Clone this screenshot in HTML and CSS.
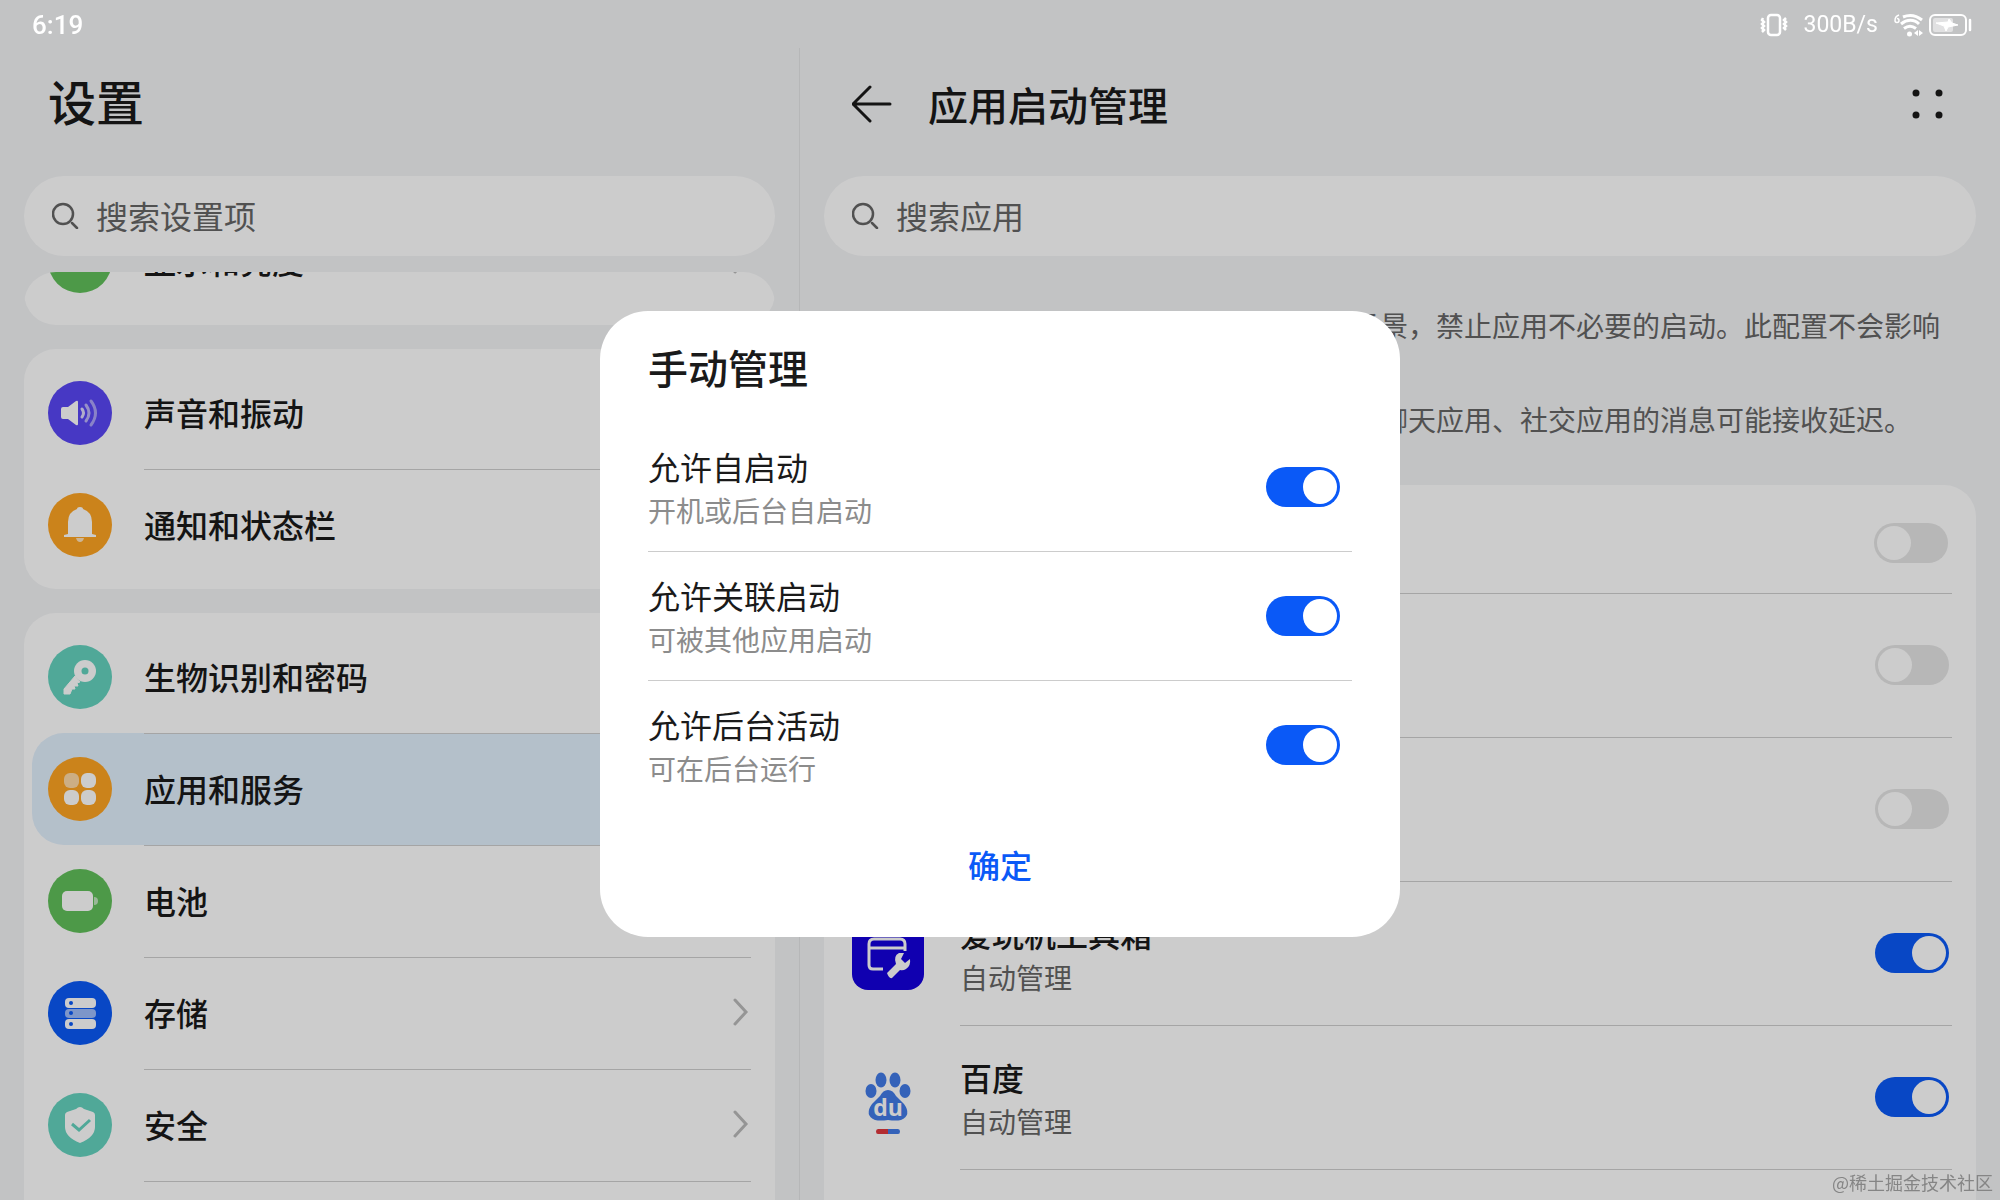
FILE: index.html
```html
<!DOCTYPE html>
<html lang="zh-CN">
<head>
<meta charset="utf-8">
<title>设置</title>
<link rel="stylesheet" href="styles.css">
</head>
<body>
<!-- 状态栏 -->
<div class="status">
	<span class="time">6:19</span>
	<div class="status-right">
		<svg class="vibrate" width="28" height="24" viewBox="0 0 28 24" fill="none" stroke="#fff" stroke-width="2.500">
			<rect x="8" y="2" width="12" height="20" rx="3"/>
			<path d="M3 5l-1 2 2 2-2 2 2 2-2 2 2 2-2 2M26 5l-2 2 2 2-2 2 2 2-2 2 2 2"/>
		</svg>
		<span class="speed">300B/s</span>
		<svg width="30" height="24" viewBox="0 0 30 24" fill="none" stroke="#fff" stroke-width="3">
			<path d="M5 2C2 3 1 5 1 7.500a2 2 0 1 0 2-2" stroke-width="1.500"/>
			<path d="M9 4c7-3 14-1 19 3M7 11c6-5 13-5 18 0M10 15.500c4-3 8-3 12 0"/>
			<circle cx="15.500" cy="21" r="2.500" fill="#fff" stroke="none"/>
			<path d="M24 17v6l-4-3zM25 17v6l4-3z" fill="#fff" stroke="none"/>
		</svg>
		<svg class="battery-top" width="44" height="24" viewBox="0 0 44 24">
			<rect x="2" y="2" width="36" height="20" rx="5" fill="none" stroke="#fff" stroke-width="2"/>
			<rect x="5" y="5" width="20" height="14" rx="2" fill="#fff" opacity=".5"/>
			<path d="M8 10l12-1 1-3 3 4 6 2-10 2-2 4-2-5z" fill="#fff" stroke="#fff"/>
			<path d="M42 7v10" stroke="#fff" stroke-width="2.500" stroke-linecap="round"/>
		</svg>
	</div>
</div>

<div class="page">
	<!-- 左侧 设置列表 -->
	<div class="side">
		<header class="head">
			<h1>设置</h1>
		</header>
		<label class="search">
			<svg width="28" height="28" viewBox="0 0 28 28" fill="none" stroke="#666" stroke-width="2.500" stroke-linecap="round"><circle cx="11" cy="13" r="10"/><path d="M20 22l5 5"/></svg>
			<input type="text" placeholder="搜索设置项">
		</label>
		<div class="scroll">
			<div class="list">
				<ul class="card">
					<li class="item">
						<span class="icon green"><svg width="64" height="64" viewBox="0 0 64 64"><circle cx="32" cy="32" r="10" fill="#fff"/></svg></span>
						<a href="#" class="text">显示和亮度<svg class="more" width="16" height="28" viewBox="0 0 16 28"><path d="M2 2l11 12L2 26"/></svg></a>
					</li>
				</ul>
				<ul class="card">
					<li class="item">
						<span class="icon purple"><svg width="64" height="64" viewBox="0 0 64 64">
							<path d="M15 26h5l8-6q2-1 2 1v22q0 2-2 1l-8-6h-5q-2 0-2-2v-8q0-2 2-2z" fill="#fff"/>
							<g fill="none" stroke="#fff" stroke-width="3" stroke-linecap="round"><path d="M34 28q3 4 0 8" opacity=".8"/><path d="M38 24q6 8 0 16" opacity=".6"/><path d="M43 20q9 12 0 24" opacity=".5"/></g>
						</svg></span>
						<a href="#" class="text">声音和振动<svg class="more" width="16" height="28" viewBox="0 0 16 28"><path d="M2 2l11 12L2 26"/></svg></a>
					</li>
					<li class="item">
						<span class="icon orange"><svg width="64" height="64" viewBox="0 0 64 64" fill="#fff">
							<path d="M32 14q3 0 3 2 9 3 9 13v12l4 1v2H16v-2l4-1V29q0-10 9-13 0-2 3-2z"/>
							<path d="M28 45h8q-1 4-4 4t-4-4z" opacity=".7"/>
						</svg></span>
						<a href="#" class="text">通知和状态栏<svg class="more" width="16" height="28" viewBox="0 0 16 28"><path d="M2 2l11 12L2 26"/></svg></a>
					</li>
				</ul>
				<ul class="card">
					<li class="item">
						<span class="icon teal"><svg width="64" height="64" viewBox="0 0 64 64">
							<path d="M27 31l5 6-3 1 1 3-4 0 1 3-3 0-2 5h-6v-5z" fill="#fff" stroke="#fff" stroke-linejoin="round"/>
							<circle cx="37" cy="26" r="11" fill="#fff"/>
							<circle cx="37" cy="26" r="3.500" fill="#64d3bf"/>
						</svg></span>
						<a href="#" class="text">生物识别和密码<svg class="more" width="16" height="28" viewBox="0 0 16 28"><path d="M2 2l11 12L2 26"/></svg></a>
					</li>
					<li class="item active">
						<span class="icon orange"><svg width="64" height="64" viewBox="0 0 64 64" fill="#fff">
							<rect x="16" y="16" width="15" height="15" rx="6" opacity=".6"/><rect x="33" y="16" width="15" height="15" rx="6"/>
							<rect x="16" y="33" width="15" height="15" rx="6"/><rect x="33" y="33" width="15" height="15" rx="6"/>
						</svg></span>
						<a href="#" class="text">应用和服务<svg class="more" width="16" height="28" viewBox="0 0 16 28"><path d="M2 2l11 12L2 26"/></svg></a>
					</li>
					<li class="item">
						<span class="icon green"><svg width="64" height="64" viewBox="0 0 64 64" fill="#fff">
							<rect x="14" y="22" width="31" height="20" rx="5"/><path d="M46 28q4 0 4 4t-4 4z" opacity=".6"/>
						</svg></span>
						<a href="#" class="text">电池<svg class="more" width="16" height="28" viewBox="0 0 16 28"><path d="M2 2l11 12L2 26"/></svg></a>
					</li>
					<li class="item">
						<span class="icon blue"><svg width="64" height="64" viewBox="0 0 64 64" fill="#fff">
							<rect x="17" y="17" width="31" height="10" rx="4"/><rect x="17" y="28" width="31" height="9" rx="4" opacity=".6"/><rect x="17" y="38" width="31" height="10" rx="4"/>
							<g fill="#0a59f7"><circle cx="23" cy="22" r="2"/><circle cx="23" cy="32" r="2"/><circle cx="23" cy="43" r="2"/></g>
						</svg></span>
						<a href="#" class="text">存储<svg class="more" width="16" height="28" viewBox="0 0 16 28"><path d="M2 2l11 12L2 26"/></svg></a>
					</li>
					<li class="item">
						<span class="icon teal"><svg width="64" height="64" viewBox="0 0 64 64">
							<path d="M32 14q2 0 4 2l9 3q2 1 2 3v12q0 10-15 16-15-6-15-16V22q0-2 2-3l9-3q2-2 4-2z" fill="#fff"/>
							<path d="M24 31l7 6 11-10" fill="none" stroke="#64d3bf" stroke-width="3"/>
						</svg></span>
						<a href="#" class="text">安全<svg class="more" width="16" height="28" viewBox="0 0 16 28"><path d="M2 2l11 12L2 26"/></svg></a>
					</li>
					<li class="item">
						<span class="icon"></span>
						<span class="text"></span>
					</li>
				</ul>
			</div>
		</div>
	</div>

	<!-- 右侧 应用启动管理 -->
	<div class="main">
		<header class="head">
			<button type="button" class="back" aria-label="返回"><svg width="42" height="40" viewBox="0 0 42 40" fill="none" stroke="#1a1a1a" stroke-width="3" stroke-linecap="round" stroke-linejoin="round"><path d="M18 3L1 20l17 17M1 20h37"/></svg></button>
			<h2>应用启动管理</h2>
			<button type="button" class="menu" aria-label="更多"><svg width="32" height="32" viewBox="0 0 32 32" fill="#1a1a1a"><circle cx="4" cy="5" r="3.500"/><circle cx="27" cy="5" r="3.500"/><circle cx="4" cy="27" r="3.500"/><circle cx="27" cy="27" r="3.500"/></svg></button>
		</header>
		<label class="search">
			<svg width="28" height="28" viewBox="0 0 28 28" fill="none" stroke="#666" stroke-width="2.500" stroke-linecap="round"><circle cx="11" cy="13" r="10"/><path d="M20 22l5 5"/></svg>
			<input type="text" placeholder="搜索应用">
		</label>
		<div class="tips">
			<p>根据应用的自启动、关联启动和后台活动场景，禁止应用不必要的启动。此配置不会影响您的正常使用。</p>
			<p>禁止应用自启动或后台活动后，可能会导致聊天应用、社交应用的消息可能接收延迟。</p>
		</div>
		<ul class="card apps">
			<li class="app all">
				<div class="line"></div>
				<input type="checkbox" class="switch" aria-label="全部自动管理">
			</li>
			<li class="app">
				<span class="logo"></span>
				<div class="line end"><input type="checkbox" class="switch" aria-label="自动管理"></div>
			</li>
			<li class="app">
				<span class="logo"></span>
				<div class="line end"><input type="checkbox" class="switch" aria-label="自动管理"></div>
			</li>
			<li class="app">
				<span class="logo tool"><svg width="72" height="72" viewBox="0 0 72 72">
					<path d="M31 51H21q-4 0-4-4V26q0-5 5-5h26q5 0 5 5v7M17 30h36" fill="none" stroke="#fff" stroke-width="3"/>
					<path d="M35 55l9-9q-3-8 3-11l5 0-3 6 4 4 5-4q1 7-4 10-3 2-6 1l-8 8q-3 1-5-5z" fill="#fff"/>
				</svg></span>
				<div class="line"><label for="a3"><span class="name">爱玩机工具箱</span><span class="sub">自动管理</span></label><input type="checkbox" class="switch" id="a3" checked></div>
			</li>
			<li class="app">
				<span class="logo"><svg width="72" height="72" viewBox="0 0 72 72">
					<g fill="#417be8">
						<ellipse cx="29" cy="18" rx="5.500" ry="7.500"/><ellipse cx="43" cy="18" rx="5.500" ry="7.500"/>
						<ellipse cx="19" cy="29" rx="5.500" ry="7"/><ellipse cx="53" cy="29" rx="5.500" ry="7"/>
						<path d="M36 28q5 0 8 6l8 8q8 11-3 16-5 1-13 0-8 1-13 0-11-5-3-16l8-8q3-6 8-6z"/>
						<path d="M36 67h10q2 0 2 2.500T46 72H36z"/>
					</g>
					<path d="M36 67H26q-2 0-2 2.500T26 72h10z" fill="#e0383e"/>
					<text x="36" y="54" class="du">du</text>
				</svg></span>
				<div class="line"><label for="a4"><span class="name">百度</span><span class="sub">自动管理</span></label><input type="checkbox" class="switch" id="a4" checked></div>
			</li>
			<li class="app">
				<span class="logo"></span>
				<div class="line"></div>
			</li>
		</ul>
	</div>
</div>

<!-- 弹窗 -->
<div class="mask">
	<div class="dialog" role="dialog" aria-labelledby="dt">
		<h2 id="dt">手动管理</h2>
		<div class="opt">
			<label for="s1"><span class="name">允许自启动</span><span class="sub">开机或后台自启动</span></label>
			<input type="checkbox" class="switch" id="s1" checked>
		</div>
		<div class="opt">
			<label for="s2"><span class="name">允许关联启动</span><span class="sub">可被其他应用启动</span></label>
			<input type="checkbox" class="switch" id="s2" checked>
		</div>
		<div class="opt">
			<label for="s3"><span class="name">允许后台活动</span><span class="sub">可在后台运行</span></label>
			<input type="checkbox" class="switch" id="s3" checked>
		</div>
		<button type="button" class="ok">确定</button>
	</div>
</div>
<div class="mark">@稀土掘金技术社区</div>
</body>
</html>
```
FILE: styles.css
```css
*{ margin:0; padding:0; box-sizing:border-box;}
body{ height:100vh; overflow:hidden; background:#f3f4f6; color:#1a1a1a; font:32px/48px "Noto Sans CJK SC",sans-serif;}
ul{ list-style:none;}
a{ color:inherit; text-decoration:none;}
button{ border:0; background:none; font:inherit; color:inherit; cursor:pointer;}
svg{ display:block;}

/* 状态栏 */
.status{ position:fixed; top:0; left:0; right:0; z-index:3; height:48px; padding:2px 28px 0 32px; display:flex; align-items:center; justify-content:space-between; color:#fff; font-family:Roboto,sans-serif;}
.time{ font-size:26px; font-weight:500;}
.status-right{ display:flex; align-items:center;}
.speed{ margin:0 16px; font-size:23px;}
.battery-top{ margin-left:4px;}

.page{ height:100%; padding-top:48px; display:flex;}
.side{ width:40%; padding:0 24px; display:flex; flex-direction:column; border-right:1px solid #e4e5e7;}
.main{ flex:1; overflow:hidden; padding:0 24px;}
.head{ height:128px; padding:0 32px 16px 24px; display:flex; align-items:center;}
.side .head{ padding-bottom:24px;}
.main .head{ padding-left:28px;}
h1{ font-size:48px; line-height:64px; font-weight:500;}
h2{ font-size:40px; line-height:56px; font-weight:500;}
.back{ margin-right:34px;}
.menu{ margin-left:auto;}

.search{ height:80px; flex:none; padding:0 28px 2px; display:flex; align-items:center; gap:16px; background:#fff; border-radius:40px;}
.search input{ flex:1; border:0; outline:0; background:none; font:inherit; color:#1a1a1a;}
.search input::placeholder{ color:#666; opacity:1;}

/* 左侧列表 */
.scroll{ flex:1; margin-top:16px; overflow:hidden; border-radius:32px 32px 0 0;}
.list{ margin-top:-75px;}
.card{ padding:8px; margin-bottom:24px; background:#fff; border-radius:32px;}
.item{ height:112px; padding:0 16px; display:flex; align-items:center; gap:32px; border-radius:32px;}
.active{ background:#e2f0fd;}
.icon{ flex:none; width:64px; height:64px; border-radius:50%;}
.text{ flex:1; height:100%; padding:0 2px 3px 0; display:flex; align-items:center; justify-content:space-between; font-weight:500;}
.item+.item .text{ border-top:1px solid #cfcfcf;}
.more{ fill:none; stroke:#bbb; stroke-width:3; stroke-linecap:round;}
.green{ background:#61c05a;}
.purple{ background:#5947f5;}
.orange{ background:#fea422;}
.teal{ background:#64d3bf;}
.blue{ background:#0a59f7;}

/* 右侧 */
.tips{ padding:50px 24px 0; color:#666; font-size:28px; line-height:38px;}
.tips p{ margin-bottom:18px;}
.apps{ margin-top:47px; padding:8px 24px 8px 28px;}
.app{ height:144px; display:flex; align-items:center; gap:36px;}
.all{ height:100px; padding-right:4px;}
.logo{ flex:none; width:72px; height:72px; margin-top:2px; border-radius:16px;}
.tool{ background:#1500dc;}
.du{ font:bold 23px "Open Sans",sans-serif; fill:#fff; text-anchor:middle;}
.line{ flex:1; height:100%; padding:0 3px 2px 0; display:flex; align-items:center; justify-content:space-between;}
.end{ justify-content:flex-end;}
.app+.app .line{ border-top:1px solid #cfcfcf;}
.name,.sub{ display:block;}
.app .name{ font-weight:500;}
.sub{ font-size:28px; line-height:40px; color:#666;}

.switch{ appearance:none; flex:none; width:74px; height:40px; padding:3px; display:flex; border-radius:20px; background:#e5e5e5; cursor:pointer;}
.switch::before{ content:""; width:34px; height:34px; border-radius:50%; background:#fff;}
.switch:checked{ background:#0a59f7; justify-content:flex-end;}

/* 弹窗 */
.mask{ position:fixed; top:0; right:0; bottom:0; left:0; z-index:2; padding-top:48px; display:flex; align-items:center; justify-content:center; background:rgba(0,0,0,.2);}
.dialog{ width:40%; padding:28px 48px 36px; background:#fff; border-radius:48px;}
.dialog h2{ margin-bottom:28px;}
.opt{ height:128px; padding-right:12px; display:flex; align-items:center; justify-content:space-between;}
.opt+.opt{ height:129px; border-top:1px solid #ccc;}
.opt label{ padding-bottom:3px;}
.opt .sub{ color:#8c8c8c;}
.ok{ width:100%; height:72px; padding-bottom:2px; margin-top:20px; color:#0a59f7; font-weight:500;}

.mark{ position:fixed; right:7px; bottom:6px; z-index:3; color:#858585; font:18px/24px "Noto Sans CJK SC",sans-serif;}
```
